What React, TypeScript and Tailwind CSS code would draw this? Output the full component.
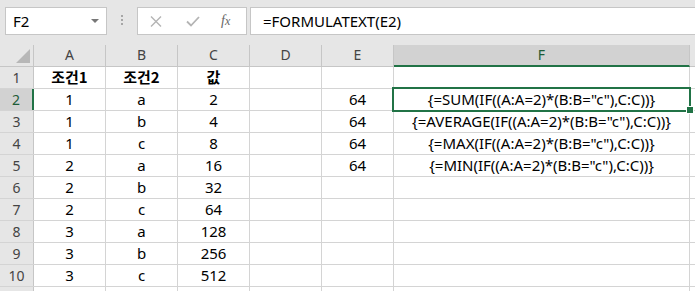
import React from "react";

const latin = { fontFamily: '"Noto Sans", "Noto Sans CJK KR", sans-serif' };
const kr = { fontFamily: '"Noto Sans CJK KR", "Noto Sans", sans-serif' };

type Row = { a: string; b: string; c: string; e?: string; f?: string };

const rows: Row[] = [
  { a: "1", b: "a", c: "2", e: "64", f: '{=SUM(IF((A:A=2)*(B:B="c"),C:C))}' },
  { a: "1", b: "b", c: "4", e: "64", f: '{=AVERAGE(IF((A:A=2)*(B:B="c"),C:C))}' },
  { a: "1", b: "c", c: "8", e: "64", f: '{=MAX(IF((A:A=2)*(B:B="c"),C:C))}' },
  { a: "2", b: "a", c: "16", e: "64", f: '{=MIN(IF((A:A=2)*(B:B="c"),C:C))}' },
  { a: "2", b: "b", c: "32" },
  { a: "2", b: "c", c: "64" },
  { a: "3", b: "a", c: "128" },
  { a: "3", b: "b", c: "256" },
  { a: "3", b: "c", c: "512" },
];

const cell =
  "h-full flex items-center justify-center border-r border-[#d4d4d4] text-[15px] text-black whitespace-nowrap";

function RowHeader({ n, selected }: { n?: number; selected?: boolean }) {
  return (
    <div
      className={
        selected
          ? "w-[34px] h-full flex items-center justify-center bg-[#d2d2d2] border-r-2 border-[#217346] text-[14px] text-[#1d5c37]"
          : "w-[34px] h-full flex items-center justify-center bg-[#e6e6e6] border-r border-[#c6c6c6] text-[14px] text-[#444]"
      }
      style={latin}
    >
      {n ?? ""}
    </div>
  );
}

export default function App() {
  return (
    <div className="w-[695px] h-[291px] overflow-hidden bg-white relative" style={latin}>
      {/* Toolbar */}
      <div className="h-[40px] bg-[#e6e6e6] flex items-start pt-[7px]">
        <div className="ml-[5px] w-[102px] h-[28px] bg-white border border-[#c6c6c6] flex items-center pl-[7px] pr-[7px]">
          <span className="text-[15px] text-black flex-1">F2</span>
          <svg width="8" height="5" viewBox="0 0 8 5">
            <path d="M0 0 L8 0 L4 4 Z" fill="#777" />
          </svg>
        </div>
        <div className="ml-[14px] mt-[8px] flex flex-col gap-[2px]">
          <div className="w-[2px] h-[2px] bg-[#a6a6a6]" />
          <div className="w-[2px] h-[2px] bg-[#a6a6a6]" />
          <div className="w-[2px] h-[2px] bg-[#a6a6a6]" />
        </div>
        <div className="ml-[14px] w-[110px] h-[28px] bg-white border border-[#c6c6c6] flex items-center">
          <svg className="ml-[12px]" width="12" height="11" viewBox="0 0 12 11">
            <path d="M1 0.5 L11 10.5 M11 0.5 L1 10.5" stroke="#b4b4b4" strokeWidth="1.4" fill="none" />
          </svg>
          <svg className="ml-[24px]" width="14" height="11" viewBox="0 0 14 11">
            <path d="M1 5.5 L5 9.5 L13 1" stroke="#b4b4b4" strokeWidth="1.8" fill="none" />
          </svg>
          <span
            className="ml-[21px] text-[14px] italic text-[#666] leading-none"
            style={{ fontFamily: '"Liberation Serif", serif' }}
          >
            f<span className="text-[12px]">x</span>
          </span>
        </div>
        <div className="ml-[3px] flex-1 h-[28px] bg-white border-y border-l border-[#c6c6c6] flex items-center pl-[12px]">
          <span className="text-[15px] text-black">=FORMULATEXT(E2)</span>
        </div>
      </div>

      {/* Column headers */}
      <div className="h-[27px] bg-[#e6e6e6] pt-[5px] flex">
        <div className="w-[34px] h-full border-r border-b border-[#c6c6c6] flex items-end justify-end pr-[3px] pb-[3px]">
          <svg width="14" height="14" viewBox="0 0 14 14">
            <path d="M14 0 L14 14 L0 14 Z" fill="#b7b7b7" />
          </svg>
        </div>
        {["A", "B", "C", "D", "E"].map((l) => (
          <div
            key={l}
            className="w-[72px] h-full border-r border-b border-[#c6c6c6] flex items-center justify-center pb-[2px] text-[14px] text-[#444]"
          >
            {l}
          </div>
        ))}
        <div className="w-[296px] h-full bg-[#d2d2d2] border-r border-[#c6c6c6] border-b-2 border-b-[#217346] flex items-center justify-center pb-[1px] text-[14px] text-[#1d5c37]">
          F
        </div>
        <div className="flex-1 h-full border-b border-[#c6c6c6]" />
      </div>

      {/* Row 1 */}
      <div className="h-[22px] flex border-b border-[#d4d4d4]">
        <RowHeader n={1} />
        <div className={`${cell} w-[72px] font-bold`} style={kr}>조건1</div>
        <div className={`${cell} w-[72px] font-bold`} style={kr}>조건2</div>
        <div className={`${cell} w-[72px] font-bold`} style={kr}>값</div>
        <div className={`${cell} w-[72px]`} />
        <div className={`${cell} w-[72px]`} />
        <div className={`${cell} w-[296px]`} />
        <div className="flex-1" />
      </div>

      {rows.map((r, i) => (
        <div key={i} className="h-[22px] flex border-b border-[#d4d4d4]">
          <RowHeader n={i + 2} selected={i === 0} />
          <div className={`${cell} w-[72px]`}>{r.a}</div>
          <div className={`${cell} w-[72px]`}>{r.b}</div>
          <div className={`${cell} w-[72px]`}>{r.c}</div>
          <div className={`${cell} w-[72px]`} />
          <div className={`${cell} w-[72px]`}>{r.e ?? ""}</div>
          <div className={`${cell} w-[296px]`}>{r.f ?? ""}</div>
          <div className="flex-1" />
        </div>
      ))}

      {/* Row 11 partial (only its top edge is visible) */}
      <div className="h-[22px] flex border-b border-[#d4d4d4]">
        <RowHeader />
        <div className={`${cell} w-[72px]`} />
        <div className={`${cell} w-[72px]`} />
        <div className={`${cell} w-[72px]`} />
        <div className={`${cell} w-[72px]`} />
        <div className={`${cell} w-[72px]`} />
        <div className={`${cell} w-[296px]`} />
        <div className="flex-1" />
      </div>

      {/* Selection overlay */}
      <div className="absolute left-[392px] top-[87px] w-[299px] h-[25px] border-2 border-[#217346] pointer-events-none" />
      <div className="absolute left-[686px] top-[106px] w-[8px] h-[8px] bg-[#217346] border border-white pointer-events-none" />
    </div>
  );
}
